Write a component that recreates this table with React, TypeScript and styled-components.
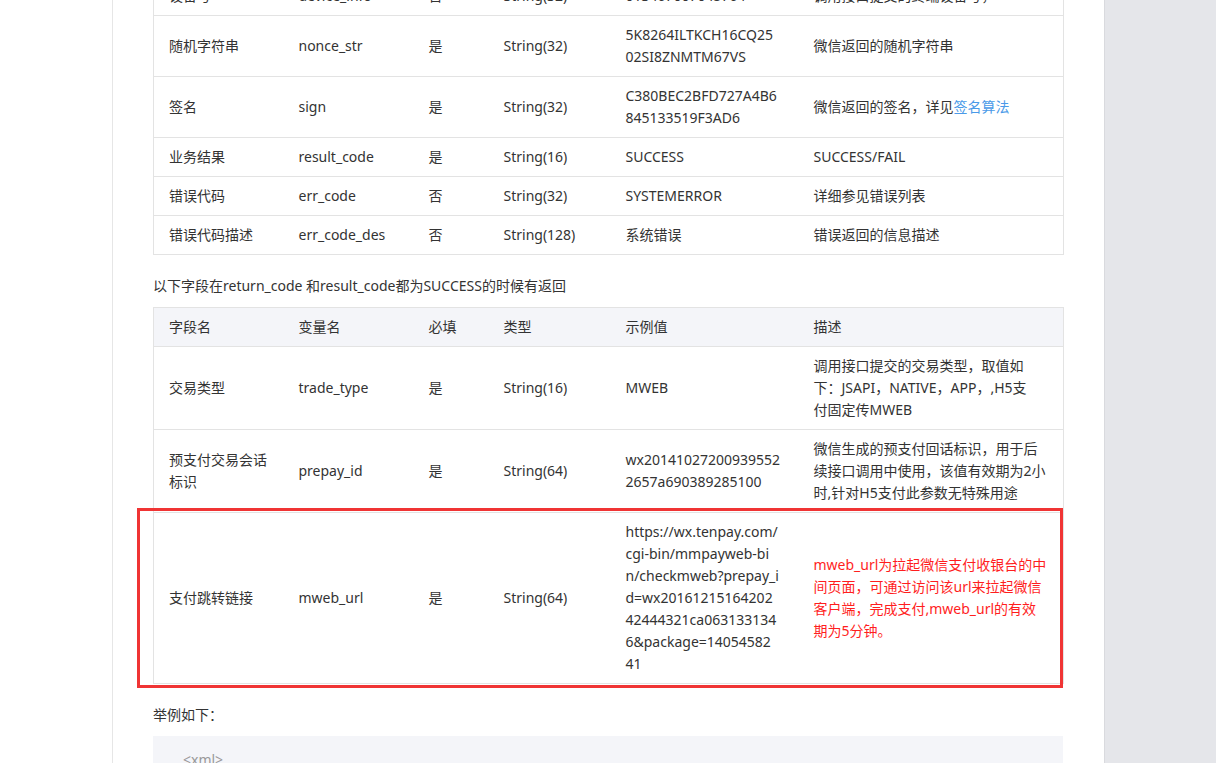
import React from "react";
import styled, { createGlobalStyle } from "styled-components";

const Global = createGlobalStyle`
  html, body { margin: 0; padding: 0; background: #fff; }
  body {
    font-family: "Microsoft YaHei", "Noto Sans", "Noto Sans CJK SC", sans-serif;
    font-size: 14px;
    color: #333;
    overflow: hidden;
  }
`;

const Page = styled.div`
  display: flex;
  height: 763px;
  overflow: hidden;
`;

const LeftGutter = styled.div`
  width: 112px;
  flex: none;
  border-right: 1px solid #e6e6e6;
`;

const Main = styled.main`
  width: 910px;
  flex: none;
  padding: 0 41px 0 40px;
`;

const Sidebar = styled.aside`
  flex: 1;
  background: #e5e6ea;
  border-left: 1px solid #d9dade;
`;

const TableWrap = styled.div<{ $shift?: number }>`
  position: relative;
  margin-top: ${(p) => (p.$shift ? `${p.$shift}px` : "0")};
`;

const Table = styled.table`
  width: 910px;
  table-layout: fixed;
  border-collapse: collapse;
  border: 1px solid #e3e3e3;
`;

const Th = styled.th`
  background: #f4f5f9;
  font-weight: normal;
  text-align: left;
  padding: 8px 15px;
  line-height: 22px;
  border-bottom: 1px solid #e3e3e3;
`;

const Td = styled.td<{ $red?: boolean }>`
  padding: 8px 15px;
  line-height: 22px;
  border-bottom: 1px solid #e3e3e3;
  vertical-align: middle;
  word-break: break-all;
  color: ${(p) => (p.$red ? "#ff1e1e" : "#333")};
`;

const Link = styled.a`
  color: #4a9ae8;
  text-decoration: none;
`;

const Para = styled.p`
  margin: 20px 0 10px;
  line-height: 22px;
`;

const CodeBlock = styled.pre`
  margin: 0;
  background: #f4f5f9;
  padding: 13px 30px;
  height: 60px;
  font-family: "Microsoft YaHei", "Noto Sans", sans-serif;
  font-size: 14px;
  line-height: 22px;
  color: #999;
`;

const Highlight = styled.div`
  position: absolute;
  left: -16px;
  right: 0;
  bottom: -4px;
  height: 180px;
  border: 3px solid #f03434;
  box-sizing: border-box;
  pointer-events: none;
`;

const widths = [130, 130, 75, 122, 188, 265];

type Cell = string | string[] | React.ReactNode;
type Row = Cell[];

const firstRows: Row[] = [
  ["设备号", "device_info", "否", "String(32)", "013467007045764", "调用接口提交的终端设备号，"],
  [
    "随机字符串",
    "nonce_str",
    "是",
    "String(32)",
    ["5K8264ILTKCH16CQ25", "02SI8ZNMTM67VS"],
    "微信返回的随机字符串",
  ],
  [
    "签名",
    "sign",
    "是",
    "String(32)",
    ["C380BEC2BFD727A4B6", "845133519F3AD6"],
    <>
      微信返回的签名，详见<Link href="#">签名算法</Link>
    </>,
  ],
  ["业务结果", "result_code", "是", "String(16)", "SUCCESS", "SUCCESS/FAIL"],
  ["错误代码", "err_code", "否", "String(32)", "SYSTEMERROR", "详细参见错误列表"],
  ["错误代码描述", "err_code_des", "否", "String(128)", "系统错误", "错误返回的信息描述"],
];

const secondRows: Row[] = [
  [
    "交易类型",
    "trade_type",
    "是",
    "String(16)",
    "MWEB",
    ["调用接口提交的交易类型，取值如", "下：JSAPI，NATIVE，APP，,H5支", "付固定传MWEB"],
  ],
  [
    ["预支付交易会话", "标识"],
    "prepay_id",
    "是",
    "String(64)",
    ["wx20141027200939552", "2657a690389285100"],
    ["微信生成的预支付回话标识，用于后", "续接口调用中使用，该值有效期为2小", "时,针对H5支付此参数无特殊用途"],
  ],
  [
    "支付跳转链接",
    "mweb_url",
    "是",
    "String(64)",
    [
      "https://wx.tenpay.com/",
      "cgi-bin/mmpayweb-bi",
      "n/checkmweb?prepay_i",
      "d=wx20161215164202",
      "42444321ca063133134",
      "6&package=14054582",
      "41",
    ],
    ["mweb_url为拉起微信支付收银台的中", "间页面，可通过访问该url来拉起微信", "客户端，完成支付,mweb_url的有效", "期为5分钟。"],
  ],
];

const renderCell = (c: Cell) =>
  Array.isArray(c)
    ? (c as string[]).map((line, k) => (
        <React.Fragment key={k}>
          {k > 0 && <br />}
          {line}
        </React.Fragment>
      ))
    : c;

const Cols = () => (
  <colgroup>
    {widths.map((w, i) => (
      <col key={i} style={{ width: w }} />
    ))}
  </colgroup>
);

const Body = ({ rows, redLast }: { rows: Row[]; redLast?: boolean }) => (
  <tbody>
    {rows.map((r, i) => (
      <tr key={i}>
        {r.map((c, j) => (
          <Td key={j} $red={redLast && i === rows.length - 1 && j === 5}>
            {renderCell(c)}
          </Td>
        ))}
      </tr>
    ))}
  </tbody>
);

export default function App() {
  return (
    <>
      <Global />
      <Page>
        <LeftGutter />
        <Main>
          <TableWrap $shift={-24}>
            <Table>
              <Cols />
              <Body rows={firstRows} />
            </Table>
          </TableWrap>
          <Para>以下字段在return_code 和result_code都为SUCCESS的时候有返回</Para>
          <TableWrap>
            <Table>
              <Cols />
              <thead>
                <tr>
                  {["字段名", "变量名", "必填", "类型", "示例值", "描述"].map((h) => (
                    <Th key={h}>{h}</Th>
                  ))}
                </tr>
              </thead>
              <Body rows={secondRows} redLast />
            </Table>
            <Highlight />
          </TableWrap>
          <Para>举例如下：</Para>
          <CodeBlock>{"<xml>"}</CodeBlock>
        </Main>
        <Sidebar />
      </Page>
    </>
  );
}
